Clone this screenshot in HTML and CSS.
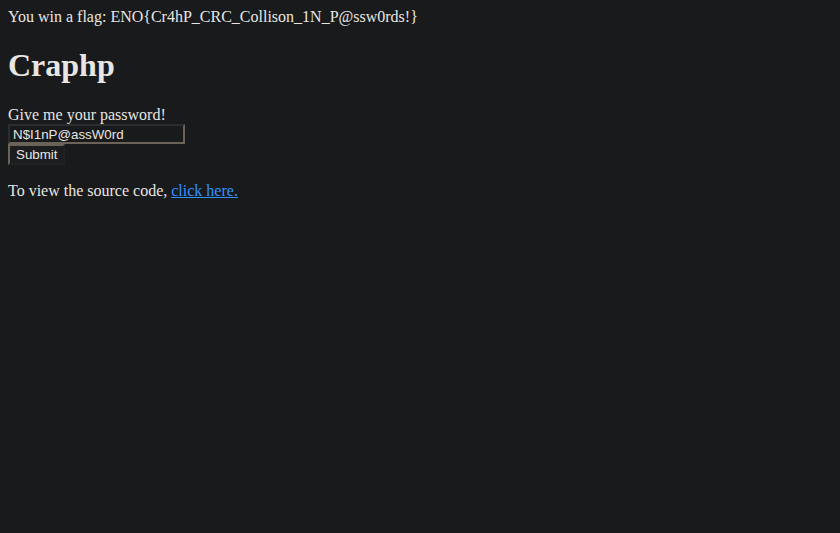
FILE: index.html
```html
<!DOCTYPE html>
<html>
<head>
<meta charset="utf-8">
<link rel="stylesheet" href="styles.css">
</head>
<body>
<div class="flag">You win a flag: ENO{Cr4hP_CRC_Collison_1N_P@ssw0rds!}</div>
<h1 class="title">Craphp</h1>
<form class="form">
<div class="label">Give me your password!</div>
<input class="pw" type="text" value="N$I1nP@assW0rd"><br>
<button class="submit" type="button">Submit</button>
</form>
<p class="source">To view the source code, <a class="link" href="#">click here.</a></p>
</body>
</html>
```
FILE: styles.css
```css
html { background: #181a1b; }
body {
  margin: 8px;
  background: #181a1b;
  color: #e8e6e3;
  font-family: "Liberation Serif", "Times New Roman", serif;
  font-size: 16px;
  line-height: normal;
}
.flag { margin: 0; }
.title {
  font-size: 32px;
  font-weight: bold;
  margin: 21px 0 22px;
}
.form { margin: 0; }
.label { margin: 0; }
.pw {
  box-sizing: border-box;
  width: 177px;
  height: 20px;
  margin: 0;
  padding: 1px 3px;
  font-family: "Liberation Sans", Arial, sans-serif;
  font-size: 13.33px;
  color: #e8e6e3;
  background: #181a1b;
  border-style: solid;
  border-width: 2px;
  border-color: #2b2e30 #6b6357 #6b6357 #2b2e30;
  outline: none;
  vertical-align: top;
}
.submit {
  box-sizing: border-box;
  width: 57px;
  height: 21px;
  margin: 0;
  padding: 1px 6px;
  font-family: "Liberation Sans", Arial, sans-serif;
  font-size: 13.33px;
  color: #e8e6e3;
  background: #1b1d1e;
  border-style: solid;
  border-width: 2px;
  border-color: #6b6357 #1f2123 #1f2123 #6b6357;
  text-align: left;
  vertical-align: top;
}
.source { margin: 17px 0 16px; }
.link { color: #3391ff; }
```
